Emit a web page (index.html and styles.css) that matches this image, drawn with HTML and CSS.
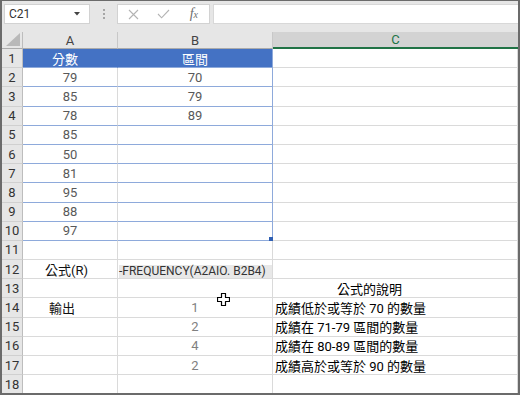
FILE: index.html
```html
<!DOCTYPE html>
<html lang="zh-Hant">
<head>
  <meta charset="UTF-8">
  <meta name="viewport" content="width=device-width, initial-scale=1.0">
  <title>FREQUENCY</title>
  <link rel="stylesheet" href="styles.css">
</head>
<body>
  <div class="window">
    <div class="bar">
      <div class="namebox">
        <span>C21</span>
        <svg class="caret" width="6" height="4" viewBox="0 0 6 4"><polygon points="0,0 6,0 3,3.5" fill="#444"/></svg>
      </div>
      <div class="grip"><i></i><i></i><i></i></div>
      <div class="fnbox">
        <span class="fn-btn">
          <svg width="11" height="11" viewBox="0 0 11 11"><path d="M1 1 L10 10 M10 1 L1 10" stroke="#b3b3b3" stroke-width="1.1" fill="none"/></svg>
        </span>
        <span class="fn-btn">
          <svg width="13" height="10" viewBox="0 0 13 10"><path d="M1 5 L4.6 8.8 L12 1" stroke="#b3b3b3" stroke-width="1.1" fill="none"/></svg>
        </span>
        <span class="fn-btn fx">f<sub>x</sub></span>
      </div>
      <div class="formula"></div>
    </div>

    <div class="sheet">
      <div class="corner">
        <svg width="14" height="13" viewBox="0 0 14 13"><polygon points="0,13 14,13 14,0" fill="#b9b9b9"/></svg>
      </div>
      <div class="colhead">A</div>
      <div class="colhead">B</div>
      <div class="colhead active">C</div>

      <div class="rowhead">1</div>
      <div class="cell th th-a">分數</div>
      <div class="cell th th-b">區間</div>
      <div class="cell"></div>

      <div class="rowhead">2</div>
      <div class="cell num tb">79</div>
      <div class="cell num tb tb-end">70</div>
      <div class="cell"></div>

      <div class="rowhead">3</div>
      <div class="cell num tb">85</div>
      <div class="cell num tb tb-end">79</div>
      <div class="cell"></div>

      <div class="rowhead">4</div>
      <div class="cell num tb">78</div>
      <div class="cell num tb tb-end">89</div>
      <div class="cell"></div>

      <div class="rowhead">5</div>
      <div class="cell num tb">85</div>
      <div class="cell tb tb-end"></div>
      <div class="cell"></div>

      <div class="rowhead">6</div>
      <div class="cell num tb">50</div>
      <div class="cell tb tb-end"></div>
      <div class="cell"></div>

      <div class="rowhead">7</div>
      <div class="cell num tb">81</div>
      <div class="cell tb tb-end"></div>
      <div class="cell"></div>

      <div class="rowhead">8</div>
      <div class="cell num tb">95</div>
      <div class="cell tb tb-end"></div>
      <div class="cell"></div>

      <div class="rowhead">9</div>
      <div class="cell num tb">88</div>
      <div class="cell tb tb-end"></div>
      <div class="cell"></div>

      <div class="rowhead">10</div>
      <div class="cell num tb">97</div>
      <div class="cell tb tb-end handle"></div>
      <div class="cell"></div>

      <div class="rowhead">11</div>
      <div class="cell"></div>
      <div class="cell"></div>
      <div class="cell"></div>

      <div class="rowhead">12</div>
      <div class="cell label">公式(R)</div>
      <div class="cell formula-cell"><span class="ftext">-FREQUENCY(A2AIO. B2B4)</span></div>
      <div class="cell"></div>

      <div class="rowhead">13</div>
      <div class="cell"></div>
      <div class="cell"></div>
      <div class="cell note note-title">公式的說明</div>

      <div class="rowhead">14</div>
      <div class="cell label out-label">輸出</div>
      <div class="cell num out">1</div>
      <div class="cell note">成績低於或等於 70 的數量</div>

      <div class="rowhead">15</div>
      <div class="cell"></div>
      <div class="cell num out">2</div>
      <div class="cell note">成績在 71-79 區間的數量</div>

      <div class="rowhead">16</div>
      <div class="cell"></div>
      <div class="cell num out">4</div>
      <div class="cell note">成績在 80-89 區間的數量</div>

      <div class="rowhead">17</div>
      <div class="cell"></div>
      <div class="cell num out">2</div>
      <div class="cell note">成績高於或等於 90 的數量</div>

      <div class="rowhead">18</div>
      <div class="cell"></div>
      <div class="cell"></div>
      <div class="cell"></div>

      <!-- mouse pointer over the sheet -->
      <svg class="pointer" width="13" height="13" viewBox="0 0 13 13">
        <path d="M4.5 0.5 H8.5 V4.5 H12.5 V8.5 H8.5 V12.5 H4.5 V8.5 H0.5 V4.5 H4.5 Z" fill="#fff" stroke="#000" stroke-width="1.2" stroke-linejoin="round"/>
      </svg>
    </div>
  </div>
</body>
</html>
```

FILE: styles.css
```css
* {
  box-sizing: border-box;
}
body {
  margin: 0;
  background: #ffffff;
  font-family: Roboto, "Noto Sans CJK TC", sans-serif;
}
.window {
  width: 520px;
  height: 395px;
  border: 2px solid #6b6b6b;
  border-top-width: 1px;
  overflow: hidden;
  background: #e6e6e6;
}

/* formula bar */
.bar {
  display: flex;
  align-items: flex-start;
  height: 31px;
  padding: 3px 0 0 2px;
  background: #e6e6e6;
}
.namebox {
  width: 86px;
  height: 20px;
  background: #fff;
  border: 1px solid #d2d2d2;
  display: flex;
  align-items: center;
  justify-content: space-between;
  padding: 0 9px 0 4px;
  font-size: 12px;
  color: #333;
}
.grip {
  width: 27px;
  height: 20px;
  display: flex;
  flex-direction: column;
  align-items: center;
  justify-content: center;
  gap: 2px;
}
.grip i {
  width: 2px;
  height: 2px;
  background: #a6a6a6;
}
.fnbox {
  width: 93px;
  height: 20px;
  background: #fff;
  border: 1px solid #d2d2d2;
  display: flex;
  align-items: center;
}
.fn-btn {
  width: 31px;
  display: flex;
  justify-content: center;
  align-items: center;
}
.fx {
  font-family: "Liberation Serif", serif;
  font-style: italic;
  font-size: 14px;
  color: #6e6e6e;
}
.fx sub {
  font-size: 10px;
  vertical-align: -1px;
}
.formula {
  flex: 1;
  height: 20px;
  margin-left: 3px;
  background: #fff;
  border: 1px solid #d8d8d8;
  border-right: none;
}

/* grid */
.sheet {
  position: relative;
  display: grid;
  grid-template-columns: 21px 95px 155px 245px;
  grid-template-rows: 17px repeat(18, 19.2px);
  background: #fff;
  font-size: 13px;
}
.corner {
  background: #e6e6e6;
  border-right: 1px solid #bdbdbd;
  border-bottom: 1px solid #ababab;
  display: flex;
  align-items: flex-end;
  justify-content: flex-end;
  padding: 0 2px 2px 0;
}
.colhead {
  background: #e6e6e6;
  border-right: 1px solid #c8c8c8;
  border-bottom: 1px solid #ababab;
  display: flex;
  align-items: center;
  justify-content: center;
  color: #444;
  font-size: 13px;
}
.colhead.active {
  background: #d3d3d3;
  color: #217346;
  border-bottom: 2px solid #217346;
  border-right: none;
}
.rowhead {
  background: #e6e6e6;
  border-right: 1px solid #bdbdbd;
  border-bottom: 1px solid #d0d0d0;
  display: flex;
  align-items: center;
  justify-content: center;
  color: #333;
  font-size: 13px;
}
.cell {
  border-right: 1px solid #dadada;
  border-bottom: 1px solid #dadada;
  display: flex;
  align-items: center;
  padding: 0 3px;
  white-space: nowrap;
  overflow: hidden;
}
.num {
  justify-content: center;
  color: #595959;
}
.th {
  background: #4472c4;
  color: #fff;
  border-color: #4472c4;
}
.th-a {
  padding-left: 29px;
  border-bottom-color: #8eaadb;
}
.th-b {
  justify-content: center;
  border-right-color: #8eaadb;
  border-bottom-color: #8eaadb;
}
.tb {
  border-bottom-color: #8eaadb;
}
.tb-end {
  border-right-color: #8eaadb;
}
.handle {
  position: relative;
  overflow: visible;
}
.handle::after {
  content: "";
  position: absolute;
  right: -1px;
  bottom: -1px;
  width: 4px;
  height: 4px;
  background: #2f5fb3;
}
.label {
  padding-left: 22px;
  color: #111;
}
.out-label {
  padding-left: 26px;
}
.formula-cell {
  align-items: flex-end;
  padding: 0 0 0 1px;
}
.ftext {
  display: block;
  width: 100%;
  height: 13px;
  line-height: 13px;
  background: #e8e8e8;
  font-size: 12px;
  color: #333;
}
.out {
  color: #808080;
}
.note {
  color: #000;
  padding-left: 2px;
  overflow: visible;
}
.note-title {
  padding-left: 64px;
}
.pointer {
  position: absolute;
  left: 215px;
  top: 261px;
}
```
